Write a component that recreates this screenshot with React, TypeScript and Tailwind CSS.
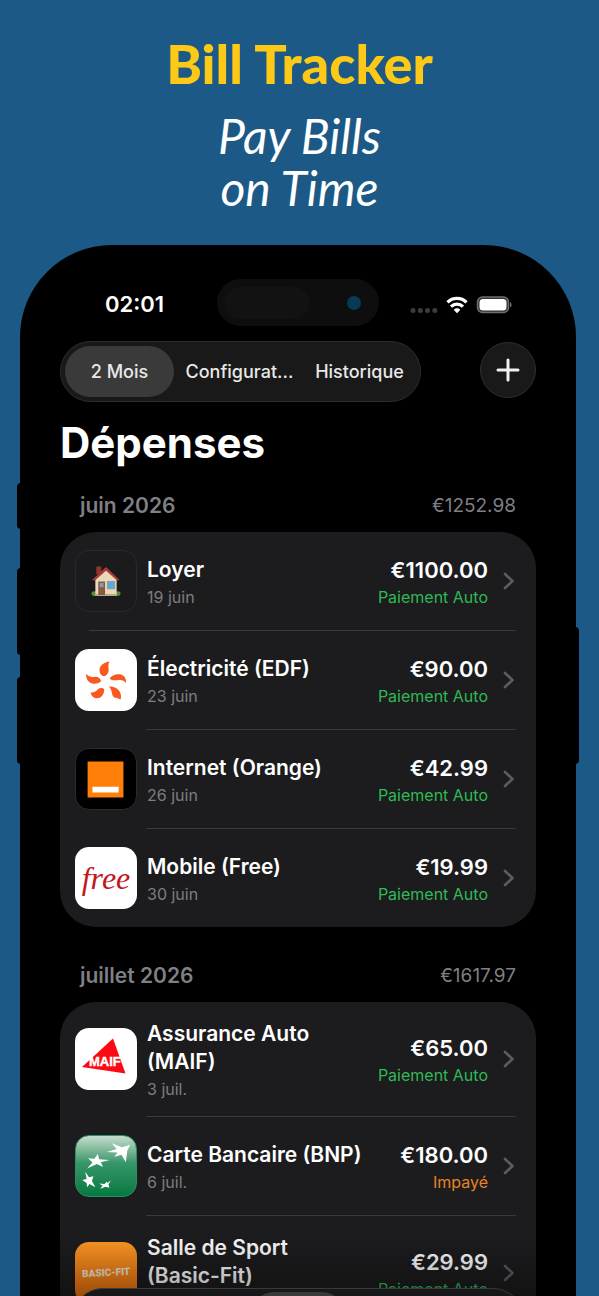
import React from "react";

function HouseIcon() {
  return (
    <svg viewBox="0 0 62 62" className="size-full" aria-hidden="true">
      <ellipse cx="19" cy="44" rx="3" ry="2.500" fill="#5d8a3c" />
      <ellipse cx="43" cy="44" rx="3" ry="2.500" fill="#5d8a3c" />
      <path d="M21 16h5v8h-5z" fill="#8e3531" />
      <path d="M20 28 31 19l11 9v18H20z" fill="#ead9b8" />
      <path d="M16.500 30 31 16.500 45 30l-2.500.5L31 20.500 19.500 30.500z" fill="#a93a38" />
      <path d="M20 44.500h22V46.500H20z" fill="#b9a98c" />
      <path d="M23 31.500h7v14h-7z" fill="#8a5a3c" />
      <path d="M24.500 33h4v4.500h-4z" fill="#6fa3c4" />
      <path d="M32 31h8.500v8.500H32z" fill="#8b9fae" />
      <path d="M33 32h6.500v6.500H33z" fill="#5fa8dc" />
    </svg>
  );
}

function EdfIcon() {
  return (
    <svg viewBox="0 0 62 62" className="size-full" aria-hidden="true" fill="#f9581e">
      <path d="M34.500 12.500c-4 .5-10 3-10 8.500 0 3.500 2 6 4.500 6.200 3-.6 5.200-4 4.600-7.500-.4-2.800-.4-5 .9-7.200z" />
      <path d="M11 25c0 5 2.500 9.500 8 9.700 3 .1 6-1 7.200-2.700-.8-2.800-3.400-4.700-6.200-4.200-3.500.6-6.500-.3-9-2.800z" />
      <path d="M34.500 29.500c2-3 6-4.700 10-4.200 4.500.6 7 4 6.500 8.700-2-2.500-4-3.500-7-3-4 .6-7.500.6-9.500-1.500z" />
      <path d="M15.500 43.500c1 4 3.500 6 7 5.800 4-.2 7-4.300 6.700-9.300-2-1.500-5-1.300-6.800.8-2 2.300-4 3-6.900 2.700z" />
      <path d="M34 37.500c3.500-.5 7 .7 9.500 3.500 2.600 3 3.200 6.500 2 9.500-2-1-3-1.500-5-1.800-2.500-.5-3-2-3.500-4.500-.5-2.700-1.500-4.700-3-6.700z" />
    </svg>
  );
}

function OrangeIcon() {
  return (
    <svg viewBox="0 0 62 62" className="size-full" aria-hidden="true">
      <path d="M12 13h37v37H12z" fill="#ff7f0a" />
      <path d="M17 39h27v6H17z" fill="#fff" />
    </svg>
  );
}

function FreeIcon() {
  return (
    <span className="font-['Liberation_Serif',serif] text-[32px] leading-none text-[#c4161c] italic">
      free
    </span>
  );
}

function MaifIcon() {
  return (
    <svg viewBox="0 0 62 62" className="size-full" aria-hidden="true">
      <path d="M38 10.500 50.500 45.500 7 39z" fill="#fb0a14" />
      <text
        x="14"
        y="37.500"
        fill="#fff"
        stroke="#fff"
        strokeWidth="0.400"
        fontFamily="Liberation Sans, sans-serif"
        fontWeight="700"
        fontSize="13"
      >
        MAIF
      </text>
    </svg>
  );
}

function BnpIcon() {
  return (
    <svg viewBox="0 0 62 62" className="size-full" aria-hidden="true" fill="#fff">
      <path d="M32 16.500 42 13.500 37 7.500 47.500 11.500 56 9 53 15 51.500 27 47 19.500 39.500 21.500 43 17z" />
      <path d="M22.500 18.500 24 24 34.500 24.700 25.700 27 28 32 21.500 29 11.500 33.500 17 27.500 12.500 23 19 23.500z" />
      <path d="M9.500 37 13.500 42.500 18 41.500 16.500 46.500 20 53 14 49.500 11.500 53 11 48.500 6.500 45.500 11 44.500z" />
      <path d="M36 46 33.500 50 34.500 53.500 30.500 52.500 25 54.500 27.500 51.500 24 49 29.500 49.500 32 47 32.500 48.500z" />
    </svg>
  );
}

function BasicFitIcon() {
  return (
    <span className="-rotate-3 font-['Roboto',sans-serif] text-[10px] leading-none font-black text-[#f3e4d0]">
      BASIC-FIT
    </span>
  );
}

type Bill = {
  name: React.ReactNode;
  date: string;
  amount: string;
  status: "Paiement Auto" | "Impayé";
  tile: string;
  icon: React.ReactNode;
};

type Month = { label: string; total: string; bills: Bill[] };

const months: Month[] = [
  {
    label: "juin 2026",
    total: "€1252.98",
    bills: [
      { name: "Loyer", date: "19 juin", amount: "€1100.00", status: "Paiement Auto", tile: "bg-[#1b1b1d] border border-[#29292b]", icon: <HouseIcon /> },
      { name: "Électricité (EDF)", date: "23 juin", amount: "€90.00", status: "Paiement Auto", tile: "bg-white", icon: <EdfIcon /> },
      { name: "Internet (Orange)", date: "26 juin", amount: "€42.99", status: "Paiement Auto", tile: "bg-black border border-[#2a2a2c]", icon: <OrangeIcon /> },
      { name: "Mobile (Free)", date: "30 juin", amount: "€19.99", status: "Paiement Auto", tile: "bg-white", icon: <FreeIcon /> },
    ],
  },
  {
    label: "juillet 2026",
    total: "€1617.97",
    bills: [
      { name: "Assurance Auto (MAIF)", date: "3 juil.", amount: "€65.00", status: "Paiement Auto", tile: "bg-white", icon: <MaifIcon /> },
      { name: "Carte Bancaire (BNP)", date: "6 juil.", amount: "€180.00", status: "Impayé", tile: "bg-linear-to-b from-[#c3ddce] via-[#35966a] via-45% to-[#00793f] border border-[#2f8f60]", icon: <BnpIcon /> },
      {
        name: (
          <>
            Salle de Sport <span className="whitespace-nowrap">(Basic-Fit)</span>
          </>
        ),
        date: "8 juil.",
        amount: "€29.99",
        status: "Paiement Auto",
        tile: "bg-linear-to-b from-[#ff9a24] to-[#f0700c]",
        icon: <BasicFitIcon />,
      },
    ],
  },
];

function BillRow({ bill }: { bill: Bill }) {
  return (
    <a href="#bill" className="flex min-h-[98px] items-center py-3.5 pr-[21px] pl-[15px]">
      <span className={`flex size-[62px] shrink-0 items-center justify-center overflow-hidden rounded-[14px] ${bill.tile}`}>
        {bill.icon}
      </span>
      <span className="ml-2.5 flex min-w-0 flex-1 flex-col pt-1">
        <span className="text-[21px] leading-7 font-semibold text-white">{bill.name}</span>
        <span className="text-base leading-[26px] text-[#7d7d82]">{bill.date}</span>
      </span>
      <span className="ml-1 flex shrink-0 flex-col items-end pt-1">
        <span className="text-[22px] leading-7 font-semibold text-white">{bill.amount}</span>
        <span className={`text-base leading-[26px] ${bill.status === "Impayé" ? "text-[#e78324]" : "text-[#2fb955]"}`}>
          {bill.status}
        </span>
      </span>
      <svg viewBox="0 0 12 18" className="ml-[15px] h-[18px] w-3 shrink-0" fill="none" stroke="#5c5c61" strokeWidth="2.600" strokeLinecap="round" strokeLinejoin="round" aria-hidden="true">
        <path d="m2 2 7.500 7L2 16" />
      </svg>
    </a>
  );
}

function MonthSection({ month, first }: { month: Month; first: boolean }) {
  return (
    <section className={first ? "mt-[25px]" : "mt-[35px]"}>
      <div className="mb-3 flex items-center justify-between px-5 leading-7 text-[#7f7f84]">
        <h3 className="text-[21px] font-semibold">{month.label}</h3>
        <p className="text-[19px]">{month.total}</p>
      </div>
      <ul className="rounded-[36px] bg-[#1c1c1e]">
        {month.bills.map((bill, i) => (
          <li key={bill.date}>
            {i > 0 && <div className={`mr-5 h-px bg-[#3a3a3d] ${first && i === 1 ? "ml-[29px]" : "ml-[86px]"}`} />}
            <BillRow bill={bill} />
          </li>
        ))}
      </ul>
    </section>
  );
}

function StatusBar() {
  return (
    <div className="grid grid-cols-[1fr_162px_1fr] items-center">
      <span className="pt-0.5 pl-[45px] text-[22px] leading-7 font-semibold text-white">02:01</span>
      <div className="flex h-[47px] items-center justify-between rounded-full bg-[#0e0e0e] pr-[18px] pl-[7px]">
        <span className="h-8 w-[86px] rounded-full bg-[#121212]" />
        <span className="size-3.5 rounded-full bg-[#073a55]" />
      </div>
      <div className="flex items-center justify-end pt-1 pr-6">
        <svg viewBox="0 0 102 20" className="h-5 w-[102px]" aria-hidden="true">
          <g fill="#3d3d3d">
            <circle cx="3" cy="15.500" r="2.500" />
            <circle cx="10.300" cy="15.500" r="2.500" />
            <circle cx="17.500" cy="15.500" r="2.500" />
            <circle cx="24.800" cy="15.500" r="2.500" />
          </g>
          <g fill="none" stroke="#fff" strokeWidth="3.300">
            <path d="M37.500 7.300a13.500 13.500 0 0 1 19 0" />
            <path d="M41 11.600a8.500 8.500 0 0 1 12 0" />
          </g>
          <path d="M43.700 14.700a4.700 4.700 0 0 1 6.600 0L47 18.200z" fill="#fff" />
          <rect x="67.500" y="2" width="31" height="15.500" rx="5" fill="#333" stroke="#6e6e6e" strokeWidth="1.500" />
          <rect x="69.500" y="4" width="27" height="11.500" rx="3.500" fill="#fff" />
          <path d="M100 7.200c2 .5 2 4.600 0 5.100z" fill="#6e6e6e" />
        </svg>
      </div>
    </div>
  );
}

function Toolbar() {
  return (
    <div className="mt-[15px] flex items-start justify-between">
      <div role="tablist" className="grid h-[61px] grid-cols-[109px_109px_109px] gap-[11px] rounded-full border border-[#2d2d2d] bg-[#191919] py-1 pr-1.5 pl-1 text-lg font-medium text-[#e8e8e8]">
        <button role="tab" aria-selected="true" className="rounded-full bg-[#3a3a3a]">2 Mois</button>
        <button role="tab" aria-selected="false" className="whitespace-nowrap">Configurat...</button>
        <button role="tab" aria-selected="false" className="whitespace-nowrap">Historique</button>
      </div>
      <button aria-label="Ajouter" className="mt-px flex size-14 items-center justify-center rounded-full border border-[#2f2f2f] bg-[#191919]">
        <svg viewBox="0 0 24 24" className="size-6" stroke="#f2f2f2" strokeWidth="3" strokeLinecap="round" aria-hidden="true">
          <path d="M12 2v20M2 12h20" />
        </svg>
      </button>
    </div>
  );
}

export default function App() {
  return (
    <main className="flex h-screen flex-col overflow-hidden bg-[#1d5986] font-['Inter',sans-serif]">
      <header className="pt-[34px] text-center">
        <h1 className="font-['Lato',sans-serif] text-[54px] leading-[60px] font-black text-[#fdc917]">Bill Tracker</h1>
        <p className="mt-4 font-['Lato',sans-serif] text-[48px] leading-[52px] text-white italic">
          Pay Bills
          <br />
          on Time
        </p>
      </header>
      <div className="relative mt-[31px] mr-[23px] ml-5 flex min-h-0 flex-1 flex-col">
        <span className="absolute top-[238px] -left-[3px] h-[46px] w-2 rounded-sm bg-black" />
        <span className="absolute top-[323px] -left-[3px] h-[87px] w-2 rounded-sm bg-black" />
        <span className="absolute top-[432px] -left-[3px] h-[87px] w-2 rounded-sm bg-black" />
        <span className="absolute top-[382px] -right-[3px] h-[137px] w-2 rounded-sm bg-black" />
        <div className="relative min-h-0 flex-1 overflow-hidden rounded-t-[92px] bg-black px-10 pt-[34px]">
          <StatusBar />
          <Toolbar />
          <h2 className="mt-[17px] text-[42px] leading-[48px] font-bold text-white">Dépenses</h2>
          {months.map((month, i) => (
            <MonthSection key={month.label} month={month} first={i === 0} />
          ))}
          <div className="pointer-events-none absolute inset-x-0 bottom-0 h-16 bg-linear-to-b from-transparent to-black/35" />
          <div className="absolute inset-x-[52px] -bottom-[54px] flex h-[62px] justify-center rounded-full border border-[#38383a] bg-[#18181a] pt-[3px]">
            <span className="h-[54px] w-[100px] rounded-full bg-[#3a3a3c]" />
          </div>
        </div>
      </div>
    </main>
  );
}
